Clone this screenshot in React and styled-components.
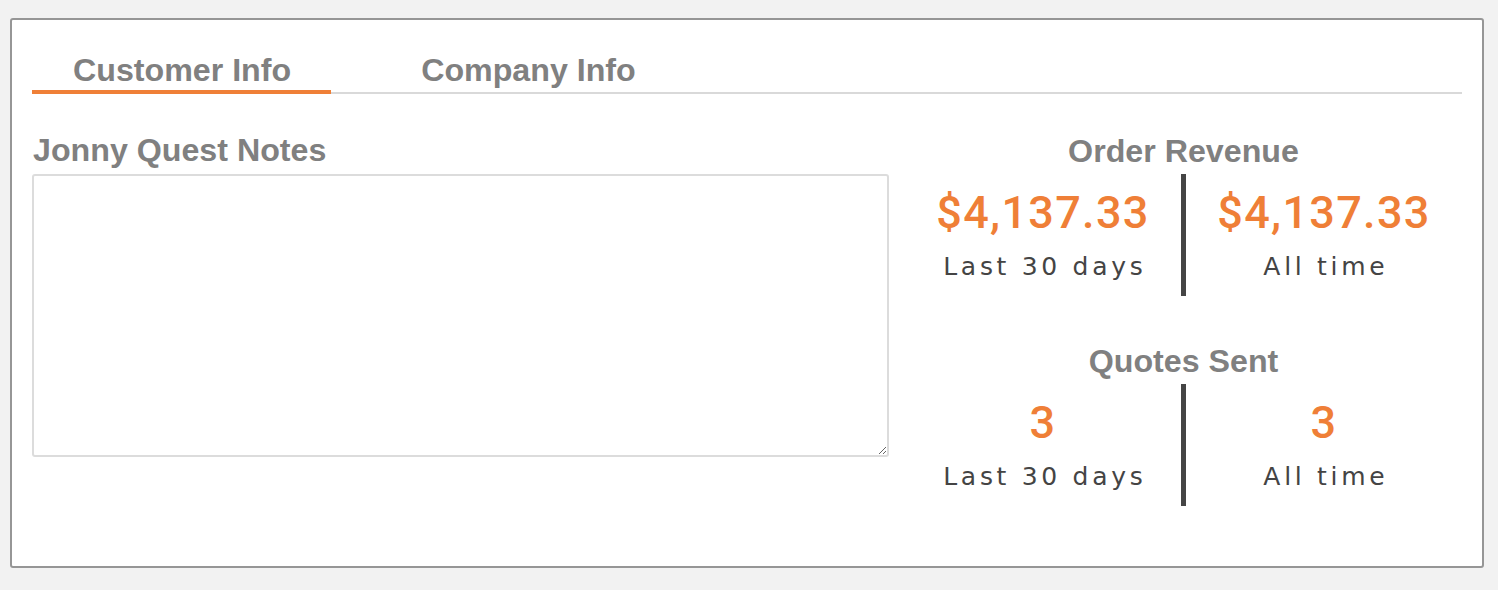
import React from "react";
import styled, { createGlobalStyle } from "styled-components";

const Global = createGlobalStyle`
  html, body { margin: 0; padding: 0; background: #f2f2f2; }
  * { box-sizing: border-box; }
`;

const Card = styled.div`
  margin: 18px 0 0 10px;
  width: 1474px;
  height: 550px;
  background: #fff;
  border: 2px solid #969696;
  border-radius: 3px;
  padding: 30px 20px 0 20px;
  font-family: "Liberation Sans", Arial, sans-serif;
`;

const TabBar = styled.div`
  display: flex;
  border-bottom: 2px solid #d9d9d9;
`;

const Tab = styled.div`
  font-size: 32.2px;
  font-weight: 700;
  line-height: 40px;
  color: #808080;
  padding: 0 40px 0 41px;
  margin-left: ${(p) => (p.$first ? 0 : 49)}px;
  margin-bottom: -2px;
  border-bottom: 4px solid ${(p) => (p.$active ? "#ef7f37" : "transparent")};
  cursor: pointer;
`;

const Content = styled.div`
  display: grid;
  grid-template-columns: 857px 1fr;
  column-gap: 16px;
  padding-top: 36px;
`;

const NotesColumn = styled.div`
  display: flex;
  flex-direction: column;
`;

const Heading = styled.div`
  font-size: 32.2px;
  font-weight: 700;
  line-height: 40px;
  color: #808080;
  text-align: ${(p) => (p.$center ? "center" : "left")};
  padding-left: ${(p) => (p.$center ? 0 : 1)}px;
`;

const Notes = styled.textarea`
  margin-top: 4px;
  height: 283px;
  width: 100%;
  border: 2px solid #dcdcdc;
  border-radius: 3px;
  outline: none;
  resize: both;
  font-family: "Liberation Sans", Arial, sans-serif;
  font-size: 16px;
  padding: 8px;
`;

const Stats = styled.div`
  display: flex;
  flex-direction: column;
  padding-top: 1px;
`;

const Group = styled.div`
  display: flex;
  flex-direction: column;
  gap: 3px;
  & + & {
    margin-top: 45px;
  }
`;

const StatRow = styled.div`
  display: grid;
  grid-template-columns: 1fr 5px 1fr;
  height: 122px;
`;

const Divider = styled.div`
  background: #454545;
`;

const Stat = styled.div`
  display: flex;
  flex-direction: column;
  align-items: center;
  padding-top: 13px;
`;

const Value = styled.div`
  font-family: Roboto, "Liberation Sans", Arial, sans-serif;
  font-weight: 500;
  font-size: 45px;
  line-height: 52px;
  letter-spacing: 1.3px;
  color: #ef7f37;
`;

const Label = styled.div`
  margin-top: 12px;
  font-family: "DejaVu Sans", sans-serif;
  font-size: 25px;
  line-height: 32px;
  letter-spacing: 3.7px;
  padding-left: 3.7px;
  color: #444;
`;

const groups = [
  { title: "Order Revenue", recent: "$4,137.33", total: "$4,137.33" },
  { title: "Quotes Sent", recent: "3", total: "3" },
];

export default function App() {
  return (
    <>
      <Global />
      <Card>
        <TabBar>
          <Tab $first $active>Customer Info</Tab>
          <Tab>Company Info</Tab>
        </TabBar>
        <Content>
          <NotesColumn>
            <Heading>Jonny Quest Notes</Heading>
            <Notes />
          </NotesColumn>
          <Stats>
            {groups.map((g) => (
              <Group key={g.title}>
                <Heading $center>{g.title}</Heading>
                <StatRow>
                  <Stat>
                    <Value>{g.recent}</Value>
                    <Label>Last 30 days</Label>
                  </Stat>
                  <Divider />
                  <Stat>
                    <Value>{g.total}</Value>
                    <Label>All time</Label>
                  </Stat>
                </StatRow>
              </Group>
            ))}
          </Stats>
        </Content>
      </Card>
    </>
  );
}
